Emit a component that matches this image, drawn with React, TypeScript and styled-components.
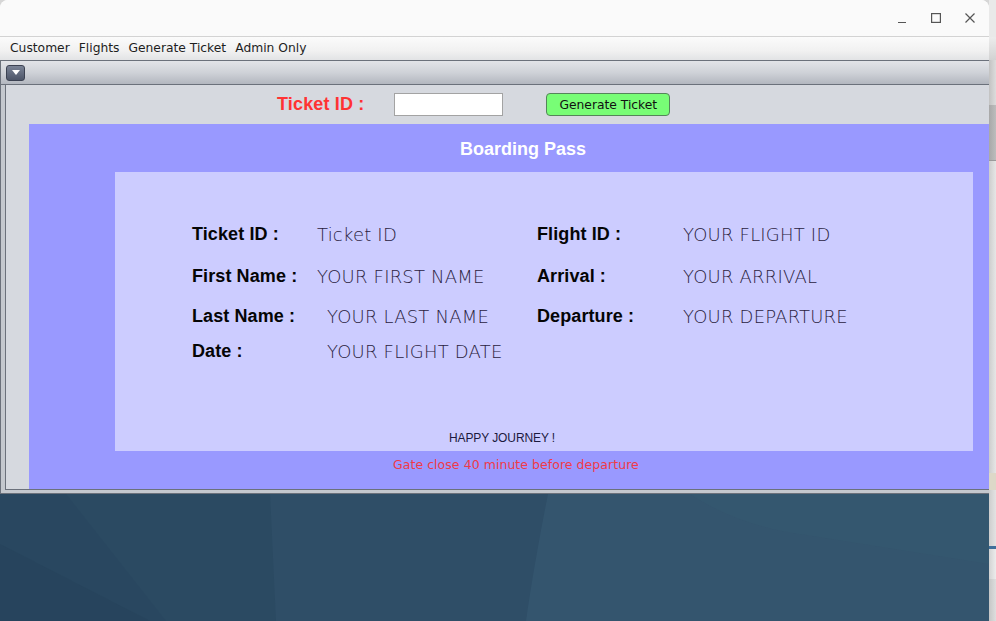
import React from "react";
import styled, { createGlobalStyle } from "styled-components";

const GlobalStyle = createGlobalStyle`
    html, body {
        margin: 0;
        padding: 0;
        width: 996px;
        height: 621px;
        overflow: hidden;
        background: #d6d6d6;
    }
    * {
        box-sizing: border-box;
    }
`;

const Screen = styled.div`
    display: flex;
    width: 996px;
    height: 621px;
`;

const MainColumn = styled.div`
    display: flex;
    flex-direction: column;
    width: 989px;
`;

const Window = styled.div`
    display: flex;
    flex-direction: column;
    height: 494px;
    overflow: hidden;
    background: #fafafa;
    border-radius: 8px 8px 0 0;
`;

const TitleBar = styled.div`
    display: flex;
    align-items: center;
    justify-content: flex-end;
    gap: 10px;
    height: 37px;
    padding-right: 7px;
    border-bottom: 1px solid #d3d3d3;
    background: #fafafa;
`;

const WinButton = styled.div`
    display: flex;
    align-items: center;
    justify-content: center;
    width: 24px;
    height: 24px;
    color: #555;
`;

const MenuBar = styled.div`
    display: flex;
    align-items: center;
    gap: 9px;
    height: 23px;
    padding: 0 0 1px 10px;
    background: linear-gradient(#fbfbfb, #f1f1f1 60%, #e2e3e5);
    font-family: "DejaVu Sans", sans-serif;
    font-size: 12.3px;
    color: #1e1e1e;
`;

const MenuItem = styled.span`
    white-space: nowrap;
`;

const InternalFrame = styled.div`
    display: flex;
    flex-direction: column;
    flex: 1;
    width: 1010px;
    border: 1px solid #6b717b;
    border-right: none;
    padding-bottom: 3px;
    background: #c4c8ce;
`;

const FrameTitle = styled.div`
    display: flex;
    align-items: center;
    height: 24px;
    padding-left: 5px;
    border-bottom: 1px solid #6b717b;
    background: linear-gradient(#e2e4e8, #cfd2d8 50%, #b3b7bf);
`;

const FrameMenuButton = styled.div`
    display: flex;
    align-items: center;
    justify-content: center;
    width: 19px;
    height: 16px;
    border: 1px solid #3c4252;
    border-radius: 3px;
    background: linear-gradient(#7a8396, #4d5568);
`;

const FrameBody = styled.div`
    display: flex;
    flex-direction: column;
    flex: 1;
    min-height: 0;
    margin-left: 4px;
    border-left: 1px solid #6b717b;
    border-bottom: 1px solid #6b717b;
    background: #d6d9df;
    overflow: hidden;
`;

const TicketRow = styled.div`
    display: flex;
    align-items: center;
    height: 39px;
    flex-shrink: 0;
    padding-left: 271px;
`;

const RedLabel = styled.span`
    font-family: "Liberation Sans", Arial, sans-serif;
    font-weight: bold;
    font-size: 18px;
    letter-spacing: 0.15px;
    color: #ff3333;
`;

const TicketInput = styled.input`
    width: 109px;
    height: 23px;
    margin-left: 30px;
    border: 1px solid #a3a3a3;
    background: #ffffff;
    outline: none;
`;

const GreenButton = styled.button`
    width: 124px;
    height: 23px;
    margin-left: 43px;
    padding: 0;
    border: 1px solid #55845a;
    border-radius: 4px;
    background: #78fd76;
    font-family: "DejaVu Sans", sans-serif;
    font-size: 12.3px;
    color: #111;
`;

const BluePanel = styled.div`
    display: flex;
    flex-direction: column;
    flex: 1;
    width: 1000px;
    margin-left: 23px;
    padding-top: 15px;
    background: #9999ff;
`;

const PassTitle = styled.div`
    margin-left: 431px;
    line-height: 20px;
    font-family: "Liberation Sans", Arial, sans-serif;
    font-weight: bold;
    font-size: 18px;
    color: #ffffff;
`;

const PassCard = styled.div`
    display: flex;
    flex-direction: column;
    width: 858px;
    height: 279px;
    margin: 13px 0 0 86px;
    padding: 51px 0 0 77px;
    background: #ccccff;
`;

const InfoRow = styled.div<{ $gap: number }>`
    display: grid;
    grid-template-columns: 125px 220px 146px auto;
    align-items: center;
    height: 22px;
    margin-top: ${(p) => p.$gap}px;
`;

const FieldLabel = styled.span`
    font-family: "Liberation Sans", Arial, sans-serif;
    font-weight: bold;
    font-size: 18px;
    letter-spacing: 0.1px;
    color: #050505;
    white-space: nowrap;
`;

const FieldValue = styled.span<{ $indent?: boolean }>`
    padding-left: ${(p) => (p.$indent ? 10 : 0)}px;
    font-family: "DejaVu Sans", sans-serif;
    font-weight: 200;
    font-size: 18px;
    letter-spacing: 0.2px;
    color: #2a2240;
    white-space: nowrap;
`;

const HappyNote = styled.div`
    margin: auto 0 5px 257px;
    line-height: 15px;
    font-family: "Liberation Sans", Arial, sans-serif;
    font-size: 12px;
    letter-spacing: -0.1px;
    color: #1c1a3e;
`;

const GateNote = styled.div`
    margin: 6px 0 0 364px;
    line-height: 16px;
    font-family: "DejaVu Sans", sans-serif;
    font-size: 12.5px;
    letter-spacing: 0.05px;
    color: #f03a48;
`;

const Wallpaper = styled.div`
    flex: 1;
    background: #2e4d66;
    svg {
        display: block;
    }
`;

const BackStrip = styled.div`
    display: flex;
    flex-direction: column;
    width: 7px;
    background: linear-gradient(to right, #c6c6c6, #e3e3e3);
`;

const StripPiece = styled.div<{ $h: number; $bg: string }>`
    height: ${(p) => p.$h}px;
    flex-shrink: 0;
    background: ${(p) => p.$bg};
`;

const rows = [
    {
        gap: 0,
        left: ["Ticket ID :", "Ticket ID"],
        right: ["Flight ID :", "YOUR FLIGHT ID"],
        indent: false,
    },
    {
        gap: 20,
        left: ["First Name :", "YOUR FIRST NAME"],
        right: ["Arrival :", "YOUR ARRIVAL"],
        indent: false,
    },
    {
        gap: 18,
        left: ["Last Name :", "YOUR LAST NAME"],
        right: ["Departure :", "YOUR DEPARTURE"],
        indent: true,
    },
    {
        gap: 13,
        left: ["Date :", "YOUR FLIGHT DATE"],
        right: null,
        indent: true,
    },
];

const App: React.FC = () => {
    return (
        <Screen>
            <GlobalStyle />
            <MainColumn>
                <Window>
                    <TitleBar>
                        <WinButton>
                            <svg width="10" height="10" viewBox="0 0 10 10">
                                <line x1="1" y1="9.5" x2="9" y2="9.5" stroke="currentColor" strokeWidth="1.2" />
                            </svg>
                        </WinButton>
                        <WinButton>
                            <svg width="10" height="10" viewBox="0 0 10 10">
                                <rect x="0.6" y="0.6" width="8.8" height="8.8" fill="none" stroke="currentColor" strokeWidth="1.2" />
                            </svg>
                        </WinButton>
                        <WinButton>
                            <svg width="10" height="10" viewBox="0 0 10 10">
                                <path d="M0.5 0.5 L9.5 9.5 M9.5 0.5 L0.5 9.5" stroke="currentColor" strokeWidth="1.2" />
                            </svg>
                        </WinButton>
                    </TitleBar>
                    <MenuBar>
                        <MenuItem>Customer</MenuItem>
                        <MenuItem>Flights</MenuItem>
                        <MenuItem>Generate Ticket</MenuItem>
                        <MenuItem>Admin Only</MenuItem>
                    </MenuBar>
                    <InternalFrame>
                        <FrameTitle>
                            <FrameMenuButton>
                                <svg width="8" height="5" viewBox="0 0 8 5">
                                    <path d="M0 0 H8 L4 5 Z" fill="#ffffff" />
                                </svg>
                            </FrameMenuButton>
                        </FrameTitle>
                        <FrameBody>
                            <TicketRow>
                                <RedLabel>Ticket ID :</RedLabel>
                                <TicketInput />
                                <GreenButton>Generate Ticket</GreenButton>
                            </TicketRow>
                            <BluePanel>
                                <PassTitle>Boarding Pass</PassTitle>
                                <PassCard>
                                    {rows.map((r) => (
                                        <InfoRow key={r.left[0]} $gap={r.gap}>
                                            <FieldLabel>{r.left[0]}</FieldLabel>
                                            <FieldValue $indent={r.indent}>{r.left[1]}</FieldValue>
                                            {r.right && <FieldLabel>{r.right[0]}</FieldLabel>}
                                            {r.right && <FieldValue>{r.right[1]}</FieldValue>}
                                        </InfoRow>
                                    ))}
                                    <HappyNote>HAPPY JOURNEY !</HappyNote>
                                </PassCard>
                                <GateNote>Gate close 40 minute before departure</GateNote>
                            </BluePanel>
                        </FrameBody>
                    </InternalFrame>
                </Window>
                <Wallpaper>
                    <svg width="989" height="127" viewBox="0 0 989 127">
                        <rect width="989" height="127" fill="#34556e" />
                        <path d="M0 0 H548 C540 40 532 85 526 127 H0 Z" fill="#2f4e67" />
                        <path d="M0 0 H270 C272 40 274 85 276 127 H0 Z" fill="#2b4a62" />
                        <path d="M0 0 H66 L166 127 H0 Z" fill="#294760" />
                        <path d="M0 50 L150 127 H0 Z" fill="#26415a" opacity="0.5" />
                        <path d="M690 0 C720 20 760 35 800 40 L989 70 V0 Z" fill="#36586f" opacity="0.6" />
                    </svg>
                </Wallpaper>
            </MainColumn>
            <BackStrip>
                <StripPiece $h={37} $bg="#e9e9e9" />
                <StripPiece $h={23} $bg="linear-gradient(#ececec, #d2d2d2)" />
                <StripPiece $h={45} $bg="linear-gradient(to right, #c2c2c2, #dcdcdc)" />
                <StripPiece $h={55} $bg="linear-gradient(to right, #a8a8a8, #bdbdbd)" />
                <StripPiece $h={1} $bg="#9a9a9a" />
                <StripPiece $h={312} $bg="linear-gradient(to right, #cdcdcd, #e6e6e6)" />
                <StripPiece $h={17} $bg="#ddd8c8" />
                <StripPiece $h={56} $bg="linear-gradient(to right, #cdcdcd, #e3e3e3)" />
                <StripPiece $h={3} $bg="#3f6f9a" />
                <StripPiece $h={30} $bg="linear-gradient(to right, #d2d2d2, #ececec)" />
                <StripPiece $h={42} $bg="linear-gradient(to right, #c6c6c6, #dedede)" />
            </BackStrip>
        </Screen>
    );
};

export default App;
